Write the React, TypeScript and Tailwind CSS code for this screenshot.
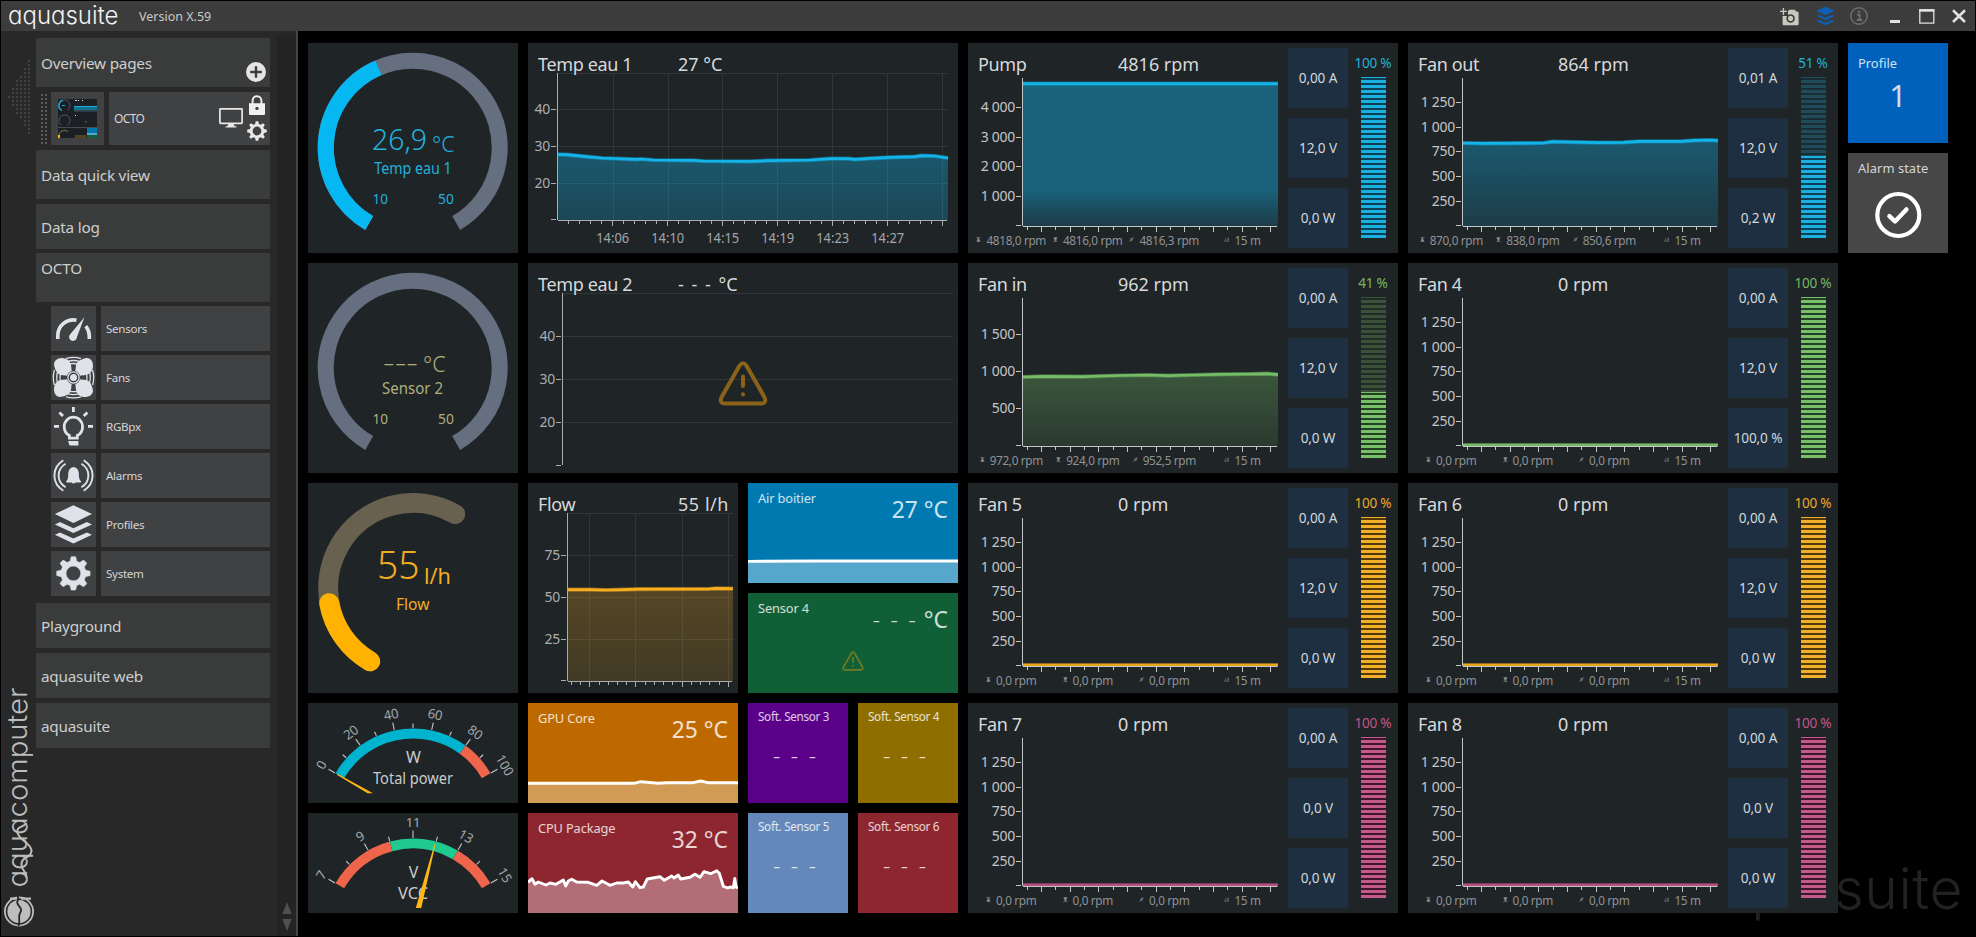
import React from "react";

type Pt = [number, number];

const FONT = "font-['Noto_Sans','Open_Sans',sans-serif]";
const GEO = "font-['Inter',sans-serif] [font-feature-settings:'cv11','ss03']";

function polar(cx: number, cy: number, r: number, deg: number): Pt {
  const a = (deg * Math.PI) / 180;
  return [cx + r * Math.sin(a), cy - r * Math.cos(a)];
}

function arc(cx: number, cy: number, r: number, from: number, to: number) {
  const [x0, y0] = polar(cx, cy, r, from);
  const [x1, y1] = polar(cx, cy, r, to);
  return `M${x0.toFixed(2)} ${y0.toFixed(2)}A${r} ${r} 0 ${to - from > 180 ? 1 : 0} 1 ${x1.toFixed(2)} ${y1.toFixed(2)}`;
}

function gearPath(c: number, outer: number, inner: number, hole: number) {
  let d = "";
  for (let i = 0; i < 8; i++) {
    const a = i * 45;
    const pts: Pt[] = [
      polar(c, c, inner, a - 15),
      polar(c, c, outer, a - 7.5),
      polar(c, c, outer, a + 7.5),
      polar(c, c, inner, a + 15),
    ];
    pts.forEach(([x, y], k) => {
      d += `${i === 0 && k === 0 ? "M" : "L"}${x.toFixed(2)} ${y.toFixed(2)}`;
    });
  }
  return `${d}Z M${c - hole} ${c}a${hole} ${hole} 0 1 0 ${hole * 2} 0a${hole} ${hole} 0 1 0 ${-hole * 2} 0Z`;
}

/* ---------- icons ---------- */

const SensorsIcon = () => (
  <svg viewBox="0 0 45 45" className="size-[45px]" fill="none" stroke="#dfe2e8" strokeWidth="3.6" strokeLinecap="butt">
    <path d="M6.8 33V29.5A15.7 15.7 0 0 1 25.5 14.2" />
    <path d="M34.8 20.2Q38.3 24.5 38.3 30V33" />
    <path d="M33.4 11.2L25.8 31.6A3.9 3.9 0 1 1 19.2 28.2Z" fill="#dfe2e8" stroke="none" />
    <circle cx="22.3" cy="30.6" r="3.4" fill="#dfe2e8" stroke="none" />
  </svg>
);

const FansIcon = () => (
  <svg viewBox="0 0 45 45" className="size-[45px]">
    <g fill="none" stroke="#dfe2e8" strokeWidth="1.3">
      <path d="M15 3.6Q22.5 1.2 30 3.6M16 6.6Q22.5 4.4 29 6.6M17 9.4Q22.5 7.6 28 9.4" />
      <path d="M15 41.8Q22.5 44 30 41.8M16 38.6Q22.5 40.8 29 38.6M17 35.8Q22.5 37.6 28 35.8" />
      <path d="M3.4 15Q1.2 22.5 3.4 30M6.8 16Q4.6 22.5 6.8 29M10 17Q8 22.5 10 28" />
      <path d="M41.6 15Q43.8 22.5 41.6 30M38.2 16Q40.4 22.5 38.2 29M35 17Q37 22.5 35 28" />
    </g>
    {[0, 90, 180, 270].map((a) => (
      <path
        key={a}
        transform={`rotate(${a} 22.5 22.5)`}
        d="M3.4 11.5C2 6.6 5.4 3 10.6 3C16.4 3 20 6.6 20.2 11.6Q20.2 15.2 21.6 18.4L18.4 21.6Q15.2 20.2 11.6 20.2C7 20 4.6 16.4 3.4 11.5Z"
        fill="#dfe2e8"
      />
    ))}
    <circle cx="22.5" cy="22.5" r="6.8" fill="#404143" />
    <circle cx="22.5" cy="22.5" r="5.6" fill="#404143" stroke="#dfe2e8" strokeWidth="1.3" />
    <circle cx="22.5" cy="22.5" r="3.5" fill="#dfe2e8" />
  </svg>
);

const BulbIcon = () => (
  <svg viewBox="0 0 45 45" className="size-[45px]" fill="none" stroke="#dfe2e8" strokeWidth="2.8">
    <path d="M18.4 34.2V31.4C14.8 29.6 13.2 26 13.2 22.4A9.2 9.2 0 0 1 31.6 22.4C31.6 26 30 29.6 26.3 31.4V34.2Z" />
    <path d="M19 38.4H26V40.2H19.6Z" />
    <path d="M22.4 3V8M3 22.4H8M37 22.4H42M8.4 8.4L12 12M36.4 8.4L32.8 12" />
  </svg>
);

const AlarmIcon = () => (
  <svg viewBox="0 0 45 45" className="size-[45px]" fill="none" stroke="#dfe2e8" strokeWidth="1.9">
    <path
      d="M15 28.4Q17.4 26.6 17.2 21.5Q17.2 14.8 22.5 13.9Q27.9 14.8 27.9 21.5Q27.7 26.6 30.2 28.4L29.6 29.4H24.6Q22.6 31.6 20.5 29.4H15.5Z"
      fill="#dfe2e8"
      stroke="none"
    />
    <path d="M12.3 7.2Q3.4 13 3.4 22.5Q3.4 32 12.3 37.7M14.6 10.8Q7.6 15 7.6 22.5Q7.6 30 14.6 34.2" />
    <path d="M32.7 7.2Q41.6 13 41.6 22.5Q41.6 32 32.7 37.7M30.4 10.8Q37.4 15 37.4 22.5Q37.4 30 30.4 34.2" />
  </svg>
);

const LayersShape = ({ fill }: { fill: string }) => (
  <g fill={fill}>
    <path d="M22.4 3.2L41 12.1L22.4 20.9L3.9 12.1Z" />
    <path d="M3.9 22.4L9 20L22.4 26.2L35.9 20L41 22.4L22.4 31Z" />
    <path d="M3.9 32.8L9 30.4L22.4 36.6L35.9 30.4L41 32.8L22.4 41.6Z" />
  </g>
);

const ProfilesIcon = () => (
  <svg viewBox="0 0 45 45" className="size-[45px]">
    <LayersShape fill="#dfe2e8" />
  </svg>
);

const SystemIcon = () => (
  <svg viewBox="0 0 45 45" className="size-[45px]">
    <path d={gearPath(22.4, 16.8, 12.6, 7.4)} fill="#dfe2e8" stroke="#dfe2e8" strokeWidth="0.6" strokeLinejoin="round" fillRule="evenodd" />
  </svg>
);

const Warning = ({ color, className, sw }: { color: string; className: string; sw: number }) => (
  <svg viewBox="0 0 50 45" className={className} fill="none" stroke={color} strokeWidth={sw} strokeLinejoin="round" strokeLinecap="round">
    <path d="M21.6 4.6Q25 0 28.4 4.6L46.6 36.4Q48.8 42.4 43 42.6H7Q1.2 42.4 3.4 36.4Z" />
    <path d="M25 15.5V25" />
    <path d="M25 33.2V33.6" />
  </svg>
);

/* ---------- sidebar ---------- */

const subItems: { label: string; icon: React.ReactNode }[] = [
  { label: "Sensors", icon: <SensorsIcon /> },
  { label: "Fans", icon: <FansIcon /> },
  { label: "RGBpx", icon: <BulbIcon /> },
  { label: "Alarms", icon: <AlarmIcon /> },
  { label: "Profiles", icon: <ProfilesIcon /> },
  { label: "System", icon: <SystemIcon /> },
];

function CollapseHandle() {
  const dots: Pt[] = [];
  for (let c = 0; c < 6; c++) {
    const n = Math.round((c * 9) / 5);
    for (let r = -n; r <= n; r++) dots.push([c * 4, 36 + r * 4]);
  }
  return (
    <svg viewBox="0 0 24 76" className="ml-[7px] mt-[29px] h-[76px] w-6" fill="#434343" shapeRendering="crispEdges">
      {dots.map(([x, y]) => (
        <rect key={`${x}-${y}`} x={x} y={y} width="2" height="2" />
      ))}
    </svg>
  );
}

function PageThumb() {
  return (
    <svg viewBox="0 0 39 39" className="size-[39px] bg-[#1c2024]" fill="none">
      <path d={arc(6.5, 6.5, 5.6, -150, 150)} stroke="#4c5567" />
      <path d={arc(6.5, 6.5, 5.6, -150, -20)} stroke="#19a6d8" strokeWidth="1.4" />
      <path d={arc(6.5, 21.5, 5.6, -150, 150)} stroke="#4c5567" />
      <path d={arc(6.5, 37, 5.6, -90, 40)} stroke="#6a5f4c" strokeWidth="1.2" />
      <rect x="16" y="8" width="23" height="3.4" fill="#12708f" />
      <rect x="16" y="7" width="23" height="1" fill="#1cb0e0" />
      <path d="M16 12H39M0 28.5H39" stroke="#5d6164" strokeWidth="0.7" />
      <path d="M17 1.5h2M20 1.5h1M24 1.5h1M17 16.5h1" stroke="#dfe2e8" />
      <path d="M4 6.5h3" stroke="#19a6d8" />
      <rect x="29" y="29" width="10" height="6" fill="#0079b0" />
      <rect x="29" y="34" width="10" height="2" fill="#57a6cb" />
      <rect x="29" y="36" width="10" height="3" fill="#115f37" />
      <rect x="17" y="36" width="11" height="3" fill="#54431c" />
      <rect x="0" y="36" width="2" height="3" fill="#ffb300" />
      <rect x="27" y="22" width="1.4" height="1.4" fill="#8a6318" />
    </svg>
  );
}

function BrandMark() {
  return (
    <svg viewBox="0 0 34 250" className={`ml-px h-[250px] w-[34px] ${GEO}`}>
      <text
        transform="translate(24.5 201.5) rotate(-90)"
        fontSize="27.5"
        fontWeight="300"
        textLength="200"
        lengthAdjust="spacingAndGlyphs"
        fill="#bdbdbd"
      >
        aquacomputer
      </text>
      <path
        d="M24.5 137C21 142 14 140 15.5 147C18 155 29.5 157 29.5 165C29 173 19 170 19.5 179C20 186 24.5 184 24.5 192"
        fill="none"
        stroke="#bdbdbd"
        strokeWidth="2"
      />
      <circle cx="17" cy="225.5" r="14.1" fill="none" stroke="#bdbdbd" strokeWidth="1.8" />
      <circle cx="17" cy="225.5" r="11.6" fill="#bdbdbd" />
      <path d="M16 210V214C12 219 22 221 18.5 226C15 231 19 234 16.5 240" fill="none" stroke="#282828" strokeWidth="1.8" />
      <path d="M8 212.6H15M19 212.6H29" stroke="#bdbdbd" strokeWidth="2.4" />
    </svg>
  );
}

const NAV = "flex items-center bg-[#3a3b3b] pl-[5px] text-[15.3px] tracking-[-0.015em] text-[#cdcfcf]";

function Sidebar() {
  return (
    <aside className="flex w-[297px] shrink-0 border-r-2 border-[#444444] bg-[#282828]">
      <div className="flex w-[35px] shrink-0 flex-col justify-between">
        <CollapseHandle />
        <BrandMark />
      </div>
      <nav className="flex w-[234px] shrink-0 flex-col pt-[7px]">
        <div className={`${NAV} h-[49px] justify-between pr-1`}>
          <span className="pt-0.5">Overview pages</span>
          <svg viewBox="0 0 20 20" className="mb-[5px] size-5 self-end">
            <circle cx="10" cy="10" r="10" fill="#e4e4e4" />
            <path d="M10 4.2V15.8M4.2 10H15.8" stroke="#3a3b3b" strokeWidth="2.4" />
          </svg>
        </div>
        <div className="mt-[5px] flex h-[53px] pl-[5px]">
          <svg viewBox="0 0 6 50" className="mr-1 mt-0.5 h-[50px] w-[6px]" fill="#5a5a5a" shapeRendering="crispEdges">
            {Array.from({ length: 13 }, (_, i) => (
              <path key={i} d={`M0 ${i * 4}h2v2h-2zM4 ${i * 4}h2v2h-2z`} />
            ))}
          </svg>
          <div className="mr-[5px] flex size-[53px] items-center justify-center bg-[#404143]">
            <PageThumb />
          </div>
          <div className="flex flex-1 bg-[#404143] pl-[5px] pr-[3px] text-[#d4d6d8]">
            <span className="flex-1 self-center text-[12px] tracking-[-0.05em]">OCTO</span>
            <svg viewBox="0 0 24 20" className="mr-1 mt-4 h-5 w-6" fill="none">
              <rect x="0.9" y="0.9" width="22.2" height="14.4" stroke="#e8e8e8" strokeWidth="1.7" rx="0.6" />
              <path d="M9.4 15.5H14.6L15.4 18.2H17.4V19.6H6.6V18.2H8.6Z" fill="#e8e8e8" />
            </svg>
            <div className="flex w-5 flex-col gap-[6px] pt-[3px]">
              <svg viewBox="0 0 20 20" className="size-5">
                <path d="M5.6 9V5.6A4.4 4.4 0 0 1 14.4 5.6V9" fill="none" stroke="#f0f0f0" strokeWidth="1.9" />
                <path d="M2 8.2H18V19Q18 20 17 20H3Q2 20 2 19Z" fill="#f0f0f0" />
                <circle cx="10" cy="13.4" r="1.7" fill="#404143" />
              </svg>
              <svg viewBox="0 0 20 20" className="size-5">
                <path d={gearPath(10, 9.9, 7.3, 4.4)} fill="#e8e8e8" fillRule="evenodd" />
              </svg>
            </div>
          </div>
        </div>
        <div className={`${NAV} mt-[5px] h-[49px] pt-0.5`}>Data quick view</div>
        <div className={`${NAV} mt-[5px] h-[45px] pt-0.5`}>Data log</div>
        <div className={`${NAV} mt-1 h-[49px] pb-[19px]`}>OCTO</div>
        <div className="mt-1 flex flex-col gap-1 pl-[15px]">
          {subItems.map((s) => (
            <div key={s.label} className="flex h-[45px] gap-[5px]">
              <div className="size-[45px] bg-[#404143]">{s.icon}</div>
              <div className="flex flex-1 items-center bg-[#404143] pl-[5px] pt-px text-[11.6px] tracking-[-0.025em] text-[#d4d6d8]">{s.label}</div>
            </div>
          ))}
        </div>
        <div className={`${NAV} mt-[7px] h-[45px] pt-0.5`}>Playground</div>
        <div className={`${NAV} mt-[5px] h-[45px] pt-0.5`}>aquasuite web</div>
        <div className={`${NAV} mt-[5px] h-[45px] pt-0.5`}>aquasuite</div>
      </nav>
      <div className="ml-[7px] mt-1 flex w-[19px] flex-col items-center justify-end bg-[#242424] pb-[5px]">
        <svg viewBox="0 0 10 29" className="h-[29px] w-[10px]" fill="#505050">
          <path d="M5 0L9.6 12H0.4ZM5 29L9.6 17H0.4Z" />
        </svg>
      </div>
    </aside>
  );
}

/* ---------- title bar ---------- */

function TitleBar() {
  return (
    <header className="flex h-[30px] shrink-0 items-center bg-[#3c3c3c] pl-[7px] pr-[9px]">
      <span className={`${GEO} -mt-px w-[131px] text-[24px] font-light leading-[24px] text-[#f2f2f2]`}>aquasuite</span>
      <span className="mt-[3px] text-[12.5px] text-[#c9c9c9]">Version X.59</span>
      <div className="ml-auto flex items-center">
        <svg viewBox="0 0 19 18" className="mr-[17px] mt-px h-[18px] w-[19px]">
          <path d="M3.4 0V7M0 3.4H7" stroke="#c9c9bd" strokeWidth="1.4" />
          <path d="M8 3.6L9 1.8H15L16 3.6H17.4Q18.6 3.6 18.6 4.8V16Q18.6 17.2 17.4 17.2H3.8Q2.6 17.2 2.6 16V8H8Z" fill="#c9c9bd" />
          <circle cx="10.6" cy="10.4" r="3.4" fill="none" stroke="#3c3c3c" strokeWidth="1.7" />
        </svg>
        <svg viewBox="3 2 39 41" className="mr-[15px] h-[20px] w-[19px]">
          <LayersShape fill="#0f5fb4" />
        </svg>
        <svg viewBox="0 0 18 18" className="mr-[22px] size-[18px]" fill="none" stroke="#707070">
          <circle cx="9" cy="9" r="8.2" strokeWidth="1.4" />
          <path d="M7 7.6H9.6V12.8M6.8 13H12" strokeWidth="1.8" />
          <path d="M8 4.8H10.2" strokeWidth="2" />
        </svg>
        <svg viewBox="0 0 76 16" className="h-4 w-[76px]" fill="none" stroke="#e0e0e0">
          <path d="M0 13.5H10" strokeWidth="3" />
          <path d="M29.8 1.8H43.8V15.2H29.8Z" strokeWidth="1.3" />
          <path d="M29.2 2.4H44.4" strokeWidth="2.6" />
          <path d="M63 2.2L75 14M75 2.2L63 14" strokeWidth="2.6" />
        </svg>
      </div>
    </header>
  );
}

/* ---------- chart pieces ---------- */

function Label(p: {
  x: number;
  y: number;
  children: string;
  size?: number;
  anchor?: "start" | "middle" | "end";
  fill?: string;
  len?: number;
  light?: boolean;
}) {
  return (
    <text
      x={p.x}
      y={p.y}
      fontSize={p.size ?? 14}
      fontWeight={p.light ? 300 : 400}
      textAnchor={p.anchor ?? "end"}
      fill={p.fill ?? "#a3a7a9"}
      textLength={p.len}
      lengthAdjust={p.len ? "spacingAndGlyphs" : undefined}
      letterSpacing={p.len ? undefined : "-0.02em"}
    >
      {p.children}
    </text>
  );
}

function Plot(p: {
  id: string;
  w: number;
  left: number;
  top: number;
  bottom: number;
  right: number;
  yTicks: [string | null, number][];
  grid?: boolean;
  vGrid?: number[];
  major?: number[];
  minor?: number[];
  xLabels?: [string, number][];
  line?: Pt[];
  color?: string;
  fillTop?: number;
  fillBottom?: number;
  fillStart?: number;
  axis?: string;
}) {
  const pts = p.line?.map(([x, y]) => `${x} ${y}`).join("L");
  const axis = p.axis ?? "#a9adae";
  const tickRight = p.left - 1.5;
  return (
    <svg viewBox={`0 0 ${p.w} 210`} width={p.w} height="210">
      <defs>
        <linearGradient id={p.id} x1="0" x2="0" y1="0" y2="1">
          <stop offset={p.fillStart ?? 0} stopColor={p.color} stopOpacity={p.fillTop ?? 0.35} />
          <stop offset="1" stopColor={p.color} stopOpacity={p.fillBottom ?? 0.18} />
        </linearGradient>
      </defs>
      <g stroke="#30363a" shapeRendering="crispEdges">
        {p.grid && <path d={`M${p.left} ${p.top + 0.5}H${p.right}`} />}
        {p.grid && p.yTicks.map(([t, y]) => t && <path key={y} d={`M${p.left} ${y}H${p.right}`} />)}
        {p.vGrid?.map((x) => <path key={x} d={`M${x} ${p.top}V${p.bottom}`} />)}
      </g>
      {pts && p.fillTop !== 0 && p.line && (
        <path d={`M${pts}L${p.line[p.line.length - 1][0]} ${p.bottom}L${p.line[0][0]} ${p.bottom}Z`} fill={`url(#${p.id})`} />
      )}
      {pts && (
        <g fill="none" stroke={p.color}>
          <path d={`M${pts}`} strokeWidth="4.2" strokeOpacity="0.45" />
          <path d={`M${pts}`} strokeWidth="2.7" />
        </g>
      )}
      <g stroke={axis} fill="none" shapeRendering="crispEdges">
        <path d={`M${p.left} ${p.top}V${p.bottom - 1}`} />
        {p.yTicks.map(([, y]) => (
          <path key={y} d={`M${tickRight - 5} ${y}H${tickRight}`} />
        ))}
        {p.major && <path d={`M${p.left + 0.5} ${p.bottom}H${p.right - 1}`} />}
        {p.major?.map((x) => <path key={x} d={`M${x} ${p.bottom}V${p.bottom + 5.5}`} />)}
        {p.minor?.map((x) => <path key={x} d={`M${x} ${p.bottom}V${p.bottom + 3.5}`} />)}
      </g>
      {p.yTicks.map(([t, y]) => t && <Label key={t} x={tickRight - 6} y={y + 4} fill={axis}>{t}</Label>)}
      {p.xLabels?.map(([t, x]) => (
        <Label key={t} x={x} y={200} anchor="middle" len={33}>
          {t}
        </Label>
      ))}
    </svg>
  );
}

function Heading({ title, value, end }: { title: string; value: React.ReactNode; end?: boolean }) {
  return (
    <div className="relative flex h-[43px] items-center pl-[10px] pr-[9px] text-[18px] text-[#d6d9db]">
      <span className={`tracking-[-0.02em] ${end ? "flex-1" : "w-[140px]"}`}>{title}</span>
      <span className="whitespace-pre">{value}</span>
    </div>
  );
}

const STACK = "grid *:[grid-area:1/1]";
const TILE = "overflow-hidden bg-[#1f2427]";

/* ---------- fan tiles ---------- */

type Theme = "blue" | "green" | "amber" | "pink";

const themes: Record<Theme, { line: string; text: string; lit: string; dim: string }> = {
  blue: {
    line: "#12b4ea",
    text: "text-[#22b1dd]",
    lit: "bg-[repeating-linear-gradient(to_top,#1bb0e0_0px,#1bb0e0_3px,#0b3f55_3px,#0b3f55_5px)]",
    dim: "bg-[repeating-linear-gradient(to_top,#204b59_0px,#204b59_3px,#192b33_3px,#192b33_5px)]",
  },
  green: {
    line: "#74bd66",
    text: "text-[#74b866]",
    lit: "bg-[repeating-linear-gradient(to_top,#78bf69_0px,#78bf69_3px,#223f25_3px,#223f25_5px)]",
    dim: "bg-[repeating-linear-gradient(to_top,#3b5139_0px,#3b5139_3px,#202b25_3px,#202b25_5px)]",
  },
  amber: {
    line: "#e9a41c",
    text: "text-[#eaaa2b]",
    lit: "bg-[repeating-linear-gradient(to_top,#f2b02a_0px,#f2b02a_3px,#523808_3px,#523808_5px)]",
    dim: "bg-[repeating-linear-gradient(to_top,#59481e_0px,#59481e_3px,#2a2719_3px,#2a2719_5px)]",
  },
  pink: {
    line: "#b84d80",
    text: "text-[#c3568a]",
    lit: "bg-[repeating-linear-gradient(to_top,#c25a8a_0px,#c25a8a_3px,#40142c_3px,#40142c_5px)]",
    dim: "bg-[repeating-linear-gradient(to_top,#4b2a3b_0px,#4b2a3b_3px,#2a1d26_3px,#2a1d26_5px)]",
  },
};

const StatIcon = ({ kind }: { kind: number }) => (
  <svg viewBox="0 0 6 6" className="mb-px size-[5px] shrink-0" fill="none" stroke="#8b8f91" strokeWidth="0.9">
    {kind === 0 && <path d="M0.6 0.8H5.2M0.6 5.2H5.2M2.9 1.2L4.4 4.8H1.4Z" fill="#8b8f91" />}
    {kind === 1 && <path d="M0.6 0.8H5.2M0.6 5.2H5.2M2.9 4.8L4.4 1.2H1.4Z" fill="#8b8f91" />}
    {kind === 2 && <path d="M0.4 5.6L5.6 0.4M1.6 4.4L2.4 1.4H4.6L3.8 4.4Z" strokeWidth="0.7" />}
    {kind === 3 && <path d="M0.3 5.2H5.4V0.8M0.6 4.8L3 0.8M3 5L5.4 0.8" strokeWidth="0.6" />}
  </svg>
);

const fanScale: [string | null, number][] = [
  ["1 250", 59.5],
  ["1 000", 84.5],
  ["750", 108.5],
  ["500", 133.5],
  ["250", 158.5],
  [null, 182.5],
];
const idle: Pt[] = [
  [55, 182],
  [310, 182],
];
const fanMajor = [73.5, 102.5, 130.5, 159.5, 188.5, 216.5, 245.5, 274.5, 302.5];
const fanMinor = [59.5, 87.5, 116.5, 145.5, 173.5, 202.5, 231.5, 259.5, 288.5];

interface Fan {
  id: string;
  title: string;
  rpm: string;
  theme: Theme;
  load: number;
  boxes: string[];
  stats: string[];
  ticks?: [string | null, number][];
  line?: Pt[];
  fill?: [number, number, number];
}

const zero = ["0,0 rpm", "0,0 rpm", "0,0 rpm", "15 m"];

const fans: Fan[] = [
  {
    id: "pump",
    title: "Pump",
    rpm: "4816 rpm",
    theme: "blue",
    load: 100,
    boxes: ["0,00 A", "12,0 V", "0,0 W"],
    stats: ["4818,0 rpm", "4816,0 rpm", "4816,3 rpm", "15 m"],
    ticks: [["4 000", 64.5], ["3 000", 94.5], ["2 000", 123.5], ["1 000", 153.5], [null, 182.5]],
    line: [[55, 40.6], [310, 40.6]],
    fill: [0.43, 0.16, 0.74],
  },
  {
    id: "fanout",
    title: "Fan out",
    rpm: "864 rpm",
    theme: "blue",
    load: 51,
    boxes: ["0,01 A", "12,0 V", "0,2 W"],
    stats: ["870,0 rpm", "838,0 rpm", "850,6 rpm", "15 m"],
    line: [[55, 100], [75, 100.3], [135, 100], [144.5, 98.7], [179, 99.3], [192, 99.7], [216, 99.3], [231, 98.3], [273, 98.3], [286, 97.3], [304, 97], [310, 97.7]],
    fill: [0.37, 0.17, 0],
  },
  {
    id: "fanin",
    title: "Fan in",
    rpm: "962 rpm",
    theme: "green",
    load: 41,
    boxes: ["0,00 A", "12,0 V", "0,0 W"],
    stats: ["972,0 rpm", "924,0 rpm", "952,5 rpm", "15 m"],
    ticks: [["1 500", 71.5], ["1 000", 108.5], ["500", 145.5], [null, 182.5]],
    line: [[55, 114], [75, 113.3], [115, 113.6], [150, 112.5], [180, 112], [200, 112.7], [225, 112], [250, 111.3], [280, 111], [300, 110.7], [310, 111.6]],
    fill: [0.33, 0.14, 0],
  },
  { id: "fan4", title: "Fan 4", rpm: "0 rpm", theme: "green", load: 100, boxes: ["0,00 A", "12,0 V", "100,0 %"], stats: zero },
  { id: "fan5", title: "Fan 5", rpm: "0 rpm", theme: "amber", load: 100, boxes: ["0,00 A", "12,0 V", "0,0 W"], stats: zero },
  { id: "fan6", title: "Fan 6", rpm: "0 rpm", theme: "amber", load: 100, boxes: ["0,00 A", "12,0 V", "0,0 W"], stats: zero },
  { id: "fan7", title: "Fan 7", rpm: "0 rpm", theme: "pink", load: 100, boxes: ["0,00 A", "0,0 V", "0,0 W"], stats: zero },
  { id: "fan8", title: "Fan 8", rpm: "0 rpm", theme: "pink", load: 100, boxes: ["0,00 A", "0,0 V", "0,0 W"], stats: zero },
];

function FanTile({ fan }: { fan: Fan }) {
  const t = themes[fan.theme];
  return (
    <section className={`col-span-4 row-span-2 flex ${TILE}`}>
      <div className={`${STACK} h-[210px] w-80`}>
        <Plot
          id={fan.id}
          w={320}
          left={54.5}
          top={35}
          bottom={183.5}
          right={310}
          yTicks={fan.ticks ?? fanScale}
          major={fanMajor}
          minor={fanMinor}
          line={fan.line ?? idle}
          color={t.line}
          fillTop={fan.fill ? fan.fill[0] : 0}
          fillBottom={fan.fill ? fan.fill[1] : 0}
          fillStart={fan.fill ? fan.fill[2] : 0}
          axis="#c3c6c7"
        />
        <Heading title={fan.title} value={fan.rpm} />
        <div className="mb-[5px] ml-[5px] grid w-[306px] grid-cols-[76.5px_76.5px_76.5px_80px] self-end text-[11.8px] leading-4 tracking-[-0.03em] text-[#8f9395]">
          {fan.stats.map((s, i) => (
            <span key={i} className="flex items-center justify-center gap-[5px] whitespace-nowrap">
              <StatIcon kind={i} />
              {s}
            </span>
          ))}
        </div>
      </div>
      <div className="flex w-[60px] flex-col gap-[10px] py-[5px]">
        {fan.boxes.map((b, i) => (
          <div key={i} className="flex h-[60px] items-center justify-center bg-[#1d2f40] text-[13.6px] tracking-[-0.01em] text-[#d2d8dc]">
            {b}
          </div>
        ))}
      </div>
      <div className="flex w-[50px] flex-col items-center pt-[12px]">
        <div className={`h-[22px] text-[13.6px] leading-4 tracking-[-0.02em] ${t.text}`}>{fan.load} %</div>
        <div className={`flex h-[161px] w-[25px] flex-col justify-end ${t.dim}`}>
          <div className={t.lit} style={{ height: `${fan.load}%` }} />
        </div>
      </div>
    </section>
  );
}

/* ---------- gauges ---------- */

function RoundGauge(p: { track: string; value?: number; color: string; width: number; end?: number; round?: boolean; children: React.ReactNode }) {
  const r = 95 - p.width / 2;
  const end = p.end ?? 150;
  return (
    <section className={`col-span-2 row-span-2 ${TILE}`}>
      <svg viewBox="0 0 210 210" width="210" height="210" fill="none" strokeWidth={p.width} strokeLinecap={p.round ? "round" : "butt"}>
        <path d={arc(104.7, 104.7, r, -150, end)} stroke={p.track} />
        {p.value !== undefined && <path d={arc(104.7, 104.7, r, -150, p.value)} stroke={p.color} />}
        <g strokeWidth="0">{p.children}</g>
      </svg>
    </section>
  );
}

function ArcGauge(p: { bands: [number, number, string][]; labels: string[]; ticks: number; unit: string; name: string; nameLen: number; unitY: number; nameY: number; needle: string }) {
  const step = 120 / (p.labels.length - 1);
  return (
    <section className={`col-span-2 ${TILE}`}>
      <svg viewBox="0 0 210 100" width="210" height="100" fill="none">
        {p.bands.map(([a, b, c]) => (
          <path key={a} d={arc(105, 115, 84.5, a, b)} stroke={c} strokeWidth="10" />
        ))}
        {Array.from({ length: p.ticks }, (_, i) => {
          const a = -60 + (i * 120) / (p.ticks - 1);
          const [x0, y0] = polar(105, 115, 90, a);
          const [x1, y1] = polar(105, 115, i % 2 ? 94.5 : 97.5, a);
          return <path key={i} d={`M${x0} ${y0}L${x1} ${y1}`} stroke="#c3c6c7" strokeWidth="1.1" />;
        })}
        {p.labels.map((l, i) => {
          const a = -60 + i * step;
          const [x, y] = polar(105, 115, 101.2, a);
          return (
            <g key={l} transform={`translate(${x} ${y}) rotate(${a})`}>
              <Label x={0} y={0} anchor="middle" size={13.2}>
                {l}
              </Label>
            </g>
          );
        })}
        <Label x={105.3} y={p.unitY} anchor="middle" size={16} fill="#c9cccd">
          {p.unit}
        </Label>
        <Label x={105} y={p.nameY} anchor="middle" size={15.4} fill="#c9cccd" len={p.nameLen}>
          {p.name}
        </Label>
        <path d={p.needle} fill="#ffb612" />
      </svg>
    </section>
  );
}

/* ---------- coloured tiles ---------- */

function spark(points: Pt[]) {
  return points.map(([x, y]) => `${x} ${y}`).join("L");
}

const airLine: Pt[] = [[0, 78.4], [65, 78], [120, 78], [210, 78]];
const gpuLine: Pt[] = [[0, 80.3], [106, 80.3], [112.7, 78.7], [119, 79.3], [130, 80.3], [139, 79.7], [165, 79.7], [172.7, 78], [180, 79.7], [210, 79.7]];
const cpuLine: Pt[] = [
  [0, 69.3], [4, 65.7], [7, 71.3], [10.3, 69], [18, 72], [22, 70], [28, 71.3], [35.3, 67], [37.7, 73], [40.3, 68], [43.7, 66.3], [48.7, 69], [60.3, 69.3],
  [68.7, 72.3], [74, 68], [82, 72.3], [88.7, 70], [95.3, 70], [100.3, 69], [104.7, 74], [107.3, 68.7], [112, 74.7], [115.3, 74], [119.3, 66], [132, 63.7],
  [136.3, 67.3], [143.7, 63], [146, 65], [150.3, 62], [152.7, 66], [162, 64.3], [167, 61.3], [172, 64.3], [176, 58.7], [182.7, 60.7], [188.7, 57.7],
  [191.3, 60.3], [195.3, 73.3], [199.7, 75], [202, 74], [205.3, 74.7], [206.8, 65.5], [208.2, 74.3], [210, 74.7],
];

function SensorTile(p: { title: string; value: string; bg: string; line?: Pt[]; area?: string; warn?: boolean }) {
  return (
    <section className={`relative ${STACK} h-[100px] overflow-hidden ${p.bg}`}>
      {p.line ? (
        <svg viewBox="0 0 210 100" width="210" height="100" fill="none">
          <path d={`M${spark(p.line)}L210 100L0 100Z`} fill={p.area} />
          <path d={`M${spark(p.line)}`} stroke="#ffffff" strokeWidth="2.9" strokeLinejoin="round" />
        </svg>
      ) : (
        <div className="flex justify-center pt-[58px]">
          <Warning color="#717c22" className="h-5 w-[22px]" sw={4} />
        </div>
      )}
      <div className="flex justify-between pl-[10px] pr-[10px] text-white/80">
        <span className="pt-[5px] text-[12.8px] leading-[20px] tracking-[-0.01em]">{p.title}</span>
        <span className="flex pt-[11px] text-[22.8px] leading-[32px]">
          {p.warn ? (
            <>
              <span className="pr-[8px] font-light [word-spacing:4.6px]">- - -</span>
              <span>°C</span>
            </>
          ) : (
            p.value
          )}
        </span>
      </div>
    </section>
  );
}

function SoftTile({ title, bg }: { title: string; bg: string }) {
  return (
    <section className={`flex flex-col pl-[10px] pt-1 text-white/80 ${bg}`}>
      <span className="whitespace-nowrap text-[11.7px] leading-[18px] tracking-[-0.025em]">{title}</span>
      <span className="pl-[15px] pt-[15px] text-[22.8px] font-light leading-[32px] [word-spacing:4.6px]">- - -</span>
    </section>
  );
}

/* ---------- dashboard ---------- */

const cyan = "#22b1dd";
const sand = "#b0ae7c";
const amber = "#f2ac22";

function Dashboard() {
  const [pump, fanOut, fanIn, fan4, fan5, fan6, fan7, fan8] = fans;
  return (
    <main className="relative flex-1 overflow-hidden bg-black pl-[10px] pt-[12px]">
      <div className={`absolute bottom-[17px] right-[12px] ${GEO} text-[57px] font-light leading-[60px] tracking-[0.01em] text-[#222222]`}>aquasuite</div>
      <div className="relative grid w-[1640px] auto-rows-[100px] grid-cols-[repeat(15,100px)] gap-[10px]">
        <RoundGauge track="#656f80" value={-23.25} color="#06b8f2" width={16}>
          <Label x={64} y={107} anchor="start" size={29.5} fill={cyan} len={55} light>26,9</Label>
          <Label x={124} y={109} anchor="start" size={22.5} fill={cyan} len={22.5} light>°C</Label>
          <Label x={105} y={131} anchor="middle" size={15.4} fill={cyan} len={77.5}>Temp eau 1</Label>
          <Label x={64.5} y={160.5} anchor="start" fill={cyan} len={15.5}>10</Label>
          <Label x={145.8} y={160.5} fill={cyan} len={15.8}>50</Label>
        </RoundGauge>

        <section className={`col-span-4 row-span-2 ${STACK} ${TILE}`}>
          <Plot
            id="temp1"
            w={430}
            left={29.5}
            top={30}
            bottom={177.5}
            right={420}
            grid
            yTicks={[["40", 66.5], ["30", 103.5], ["20", 140.5], [null, 176.5]]}
            vGrid={[85.5, 140.5, 194.5, 249.5, 304.5, 359.5, 414.5]}
            major={[84.5, 139.5, 194.5, 249.5, 304.5, 359.5, 414.5]}
            minor={Array.from({ length: 35 }, (_, i) => 40.5 + i * 11).filter((x) => (x - 84.5) % 55 !== 0)}
            xLabels={[["14:06", 84.7], ["14:10", 139.7], ["14:15", 194.7], ["14:19", 249.7], ["14:23", 304.7], ["14:27", 359.7]]}
            line={[
              [30, 111.3], [38.7, 111.7], [58.7, 113.7], [73.7, 115], [108.7, 116.3], [113.7, 116], [125.3, 117], [165.3, 117.3], [175.3, 118], [222, 118.3],
              [238.7, 117.7], [282, 117], [302, 115.7], [320.3, 115.7], [327.7, 116.3], [342, 115.3], [362, 114.3], [387, 113.7], [393.7, 112.7], [407, 113], [420, 115],
            ]}
            color="#12b4ea"
            fillTop={0.36}
            fillBottom={0.24}
          />
          <Heading title="Temp eau 1" value="27 °C" />
        </section>

        <FanTile fan={pump} />
        <FanTile fan={fanOut} />

        <section className="flex flex-col bg-[#0061bd] pt-[11px] text-[#cfe0f2]">
          <span className="pl-[10px] text-[12.9px] leading-[18px]">Profile</span>
          <span className="text-center text-[30.5px] leading-[46px] text-[#d5dde6]">1</span>
        </section>

        <RoundGauge track="#656f80" color="#656f80" width={16}>
          <Label x={75} y={109} anchor="start" size={28} fill={sand} len={35} light>---</Label>
          <Label x={115} y={109} anchor="start" size={22.5} fill={sand} len={22.5} light>°C</Label>
          <Label x={104.5} y={131} anchor="middle" size={15.4} fill={sand} len={61}>Sensor 2</Label>
          <Label x={64.5} y={160.5} anchor="start" fill={sand} len={15.5}>10</Label>
          <Label x={145.8} y={160.5} fill={sand} len={15.8}>50</Label>
        </RoundGauge>

        <section className={`col-span-4 row-span-2 ${STACK} ${TILE}`}>
          <Plot
            id="temp2"
            w={430}
            left={34.5}
            top={30}
            bottom={202.5}
            right={425}
            grid
            yTicks={[["40", 73.5], ["30", 116.5], ["20", 159.5], [null, 202.5]]}
          />
          <Heading title="Temp eau 2" value={<span className="[word-spacing:3px]">- - - °C</span>} />
          <div className="flex justify-center pt-[98px]">
            <Warning color="#8a6318" className="h-[45px] w-[50px]" sw={4} />
          </div>
        </section>

        <FanTile fan={fanIn} />
        <FanTile fan={fan4} />

        <section className="col-start-15 row-start-2 flex flex-col bg-[#474747] pt-[5px] text-[#d6d6d6]">
          <span className="pl-[10px] text-[12.9px] leading-[20px] tracking-[0.005em]">Alarm state</span>
          <svg viewBox="0 0 50 50" className="ml-[25px] mt-[12px] size-[50px]" fill="none" stroke="#ffffff" strokeLinecap="round" strokeLinejoin="round">
            <circle cx="25.3" cy="25" r="21" strokeWidth="4.2" />
            <path d="M16.4 26.2L22 31.4L33.4 19.4" strokeWidth="4.4" />
          </svg>
        </section>

        <RoundGauge track="#69614f" value={-100.5} color="#ffb300" width={20} end={30} round>
          <Label x={69} y={96} anchor="start" size={39} fill={amber} len={42.5} light>55</Label>
          <Label x={116} y={101} anchor="start" size={22.5} fill={amber} len={27}>l/h</Label>
          <Label x={104.7} y={127} anchor="middle" size={15.4} fill={amber} len={33.5}>Flow</Label>
        </RoundGauge>

        <section className={`col-span-2 row-span-2 ${STACK} ${TILE}`}>
          <Plot
            id="flow"
            w={210}
            left={39.5}
            top={30}
            bottom={198.5}
            right={205}
            grid
            yTicks={[["75", 72.5], ["50", 114.5], ["25", 156.5], [null, 197.5]]}
            vGrid={[61.5, 107.5, 154.5, 200.5]}
            major={[61.5, 107.5, 154.5, 200.5]}
            minor={[43.5, 52.5, 71.5, 80.5, 89.5, 98.5, 117.5, 126.5, 135.5, 144.5, 163.5, 172.5, 181.5, 191.5]}
            line={[[40, 106.7], [62, 106.6], [78, 107], [95, 106.7], [112, 106.2], [180, 106], [188, 105.3], [205, 105.7]]}
            color="#f7ad1c"
            fillTop={0.25}
            fillBottom={0.16}
          />
          <Heading title="Flow" value={<span className="tracking-[0.03em]">55 l/h</span>} end />
        </section>

        <div className="col-span-2">
          <SensorTile title="Air boitier" value="27 °C" bg="bg-[#0079b0]" line={airLine} area="#57a6cb" />
        </div>

        <FanTile fan={fan5} />
        <FanTile fan={fan6} />

        <div className="col-span-2 col-start-5 row-start-6">
          <SensorTile title="Sensor 4" value="" bg="bg-[#115f37]" warn />
        </div>

        <div className="col-span-2 col-start-1 row-start-7">
          <ArcGauge
            bands={[[-60, 36, "#00b4cf"], [36, 60, "#ee654c"]]}
            labels={["0", "20", "40", "60", "80", "100"]}
            ticks={11}
            unit="W"
            name="Total power"
            nameLen={80}
            unitY={60}
            nameY={81}
            needle="M29.4 70.8L65 90.2H59.6L28.8 71.8Z"
          />
        </div>
        <div className="col-span-2 col-start-3 row-start-7">
          <SensorTile title="GPU Core" value="25 °C" bg="bg-[#be6900]" line={gpuLine} area="#d19a55" />
        </div>
        <SoftTile title="Soft. Sensor 3" bg="col-start-5 row-start-7 bg-[#5a0089]" />
        <SoftTile title="Soft. Sensor 4" bg="col-start-6 row-start-7 bg-[#8f6e00]" />

        <FanTile fan={fan7} />
        <FanTile fan={fan8} />

        <div className="col-span-2 col-start-1 row-start-8">
          <ArcGauge
            bands={[[-60, -15, "#ee654c"], [-15, 30, "#1fc98f"], [30, 60, "#ee654c"]]}
            labels={["7", "9", "11", "13", "15"]}
            ticks={9}
            unit="V"
            name="VCC"
            nameLen={30}
            unitY={65}
            nameY={86}
            needle="M126.4 31.5H127.4L113.3 95H107.8Z"
          />
        </div>
        <div className="col-span-2 col-start-3 row-start-8">
          <SensorTile title="CPU Package" value="32 °C" bg="bg-[#8e2630]" line={cpuLine} area="#b26d76" />
        </div>
        <SoftTile title="Soft. Sensor 5" bg="col-start-5 row-start-8 bg-[#6388b9]" />
        <SoftTile title="Soft. Sensor 6" bg="col-start-6 row-start-8 bg-[#8e2630]" />
      </div>
    </main>
  );
}

export default function App() {
  return (
    <div className={`flex h-[937px] w-[1976px] flex-col overflow-hidden bg-black p-px ${FONT}`}>
      <TitleBar />
      <div className="flex min-h-0 flex-1">
        <Sidebar />
        <Dashboard />
      </div>
    </div>
  );
}
